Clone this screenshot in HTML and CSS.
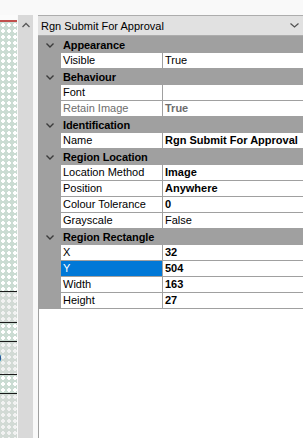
FILE: index.html
```html
<!DOCTYPE html>
<html>

<head>
  <title>Properties</title>
  <link rel="stylesheet" href="styles.css">
</head>

<body>

  <div class="top"></div>

  <div class="main">

    <!-- feuille à gauche (coupée) -->
    <div class="sheet">
      <div class="sheet-head"></div>
      <div class="sheet-row r1"></div>
      <div class="sheet-row r2"></div>
      <div class="sheet-row r3"></div>
      <div class="sheet-row r4"><span class="cut">0</span></div>
      <div class="sheet-row r5"></div>
      <div class="sheet-row r6"></div>
    </div>

    <div class="scroll">
      <svg class="up" width="8" height="6" viewBox="0 0 8 6"><path d="M0.5 5 L4 1.5 L7.5 5" fill="none" stroke="#5a5a5a" stroke-width="1.3"/></svg>
    </div>

    <div class="panel">
      <div class="combo">
        <span>Rgn Submit For Approval</span>
        <svg width="9" height="5" viewBox="0 0 9 5"><path d="M0.5 0.5 L4.5 4 L8.5 0.5" fill="none" stroke="#505050" stroke-width="1.2"/></svg>
      </div>

      <div class="grid">
        <div class="cat">
          <span class="toggle"><svg width="8" height="5" viewBox="0 0 8 5"><path d="M0.5 0.5 L4 4 L7.5 0.5" fill="none" stroke="#3c3c3c" stroke-width="1.4"/></svg></span>
          <b>Appearance</b>
        </div>
        <div class="prop"><span class="margin"></span><span class="name">Visible</span><span class="val">True</span></div>

        <div class="cat">
          <span class="toggle"><svg width="8" height="5" viewBox="0 0 8 5"><path d="M0.5 0.5 L4 4 L7.5 0.5" fill="none" stroke="#3c3c3c" stroke-width="1.4"/></svg></span>
          <b>Behaviour</b>
        </div>
        <div class="prop"><span class="margin"></span><span class="name">Font</span><span class="val"></span></div>
        <div class="prop off"><span class="margin"></span><span class="name">Retain Image</span><span class="val bold">True</span></div>

        <div class="cat">
          <span class="toggle"><svg width="8" height="5" viewBox="0 0 8 5"><path d="M0.5 0.5 L4 4 L7.5 0.5" fill="none" stroke="#3c3c3c" stroke-width="1.4"/></svg></span>
          <b>Identification</b>
        </div>
        <div class="prop"><span class="margin"></span><span class="name">Name</span><span class="val bold">Rgn Submit For Approval</span></div>

        <div class="cat">
          <span class="toggle"><svg width="8" height="5" viewBox="0 0 8 5"><path d="M0.5 0.5 L4 4 L7.5 0.5" fill="none" stroke="#3c3c3c" stroke-width="1.4"/></svg></span>
          <b>Region Location</b>
        </div>
        <div class="prop"><span class="margin"></span><span class="name">Location Method</span><span class="val bold">Image</span></div>
        <div class="prop"><span class="margin"></span><span class="name">Position</span><span class="val bold">Anywhere</span></div>
        <div class="prop"><span class="margin"></span><span class="name">Colour Tolerance</span><span class="val bold">0</span></div>
        <div class="prop"><span class="margin"></span><span class="name">Grayscale</span><span class="val">False</span></div>

        <div class="cat">
          <span class="toggle"><svg width="8" height="5" viewBox="0 0 8 5"><path d="M0.5 0.5 L4 4 L7.5 0.5" fill="none" stroke="#3c3c3c" stroke-width="1.4"/></svg></span>
          <b>Region Rectangle</b>
        </div>
        <div class="prop"><span class="margin"></span><span class="name">X</span><span class="val bold">32</span></div>
        <div class="prop selected"><span class="margin"></span><span class="name">Y</span><span class="val bold">504</span></div>
        <div class="prop"><span class="margin"></span><span class="name">Width</span><span class="val bold">163</span></div>
        <div class="prop"><span class="margin"></span><span class="name">Height</span><span class="val bold">27</span></div>
      </div>
    </div>

  </div>

</body>

</html>
```

FILE: styles.css
```css
body {
  margin: 0;
  width: 303px;
  height: 438px;
  overflow: hidden;
  background: #f9f9f9;
  font-family: "Liberation Sans", Arial, sans-serif;
  font-size: 11px;
  color: #000;
}

.top {
  height: 15px;
  background: #f9f9f9;
}

.main {
  display: flex;
  height: 423px;
}

/* feuille */
.sheet {
  width: 17px;
  display: flex;
  flex-direction: column;
  overflow: hidden;
  margin-right: 1px;
}

.sheet-head {
  height: 5px;
  background: #fbfbfb;
  border-bottom: 2px solid #c0504d;
}

.sheet-row {
  border-bottom: 1px solid #1a1a1a;
  background:
    radial-gradient(circle, #fff 40%, transparent 44%) 0 0 / 6px 6px,
    #cbdcd3;
  display: flex;
  align-items: center;
}

.r1 { height: 269px; }
.r2 { height: 30px; background: radial-gradient(circle, #f2f2f2 40%, transparent 44%) 0 0 / 6px 6px, #d2dad5; }
.r3 { height: 18px; }
.r4 { height: 32px; background: radial-gradient(circle, #f2f2f2 40%, transparent 44%) 0 0 / 6px 6px, #d2dad5; }
.r5 { height: 18px; }
.r6 { flex: 1; border-bottom: none; background: radial-gradient(circle, #f2f2f2 40%, transparent 44%) 0 0 / 6px 6px, #d2dad5; }

.cut {
  margin-left: -5px;
  font-size: 11px;
}

.scroll {
  width: 15px;
  background: #d9d9d9;
  display: flex;
  justify-content: center;
  align-items: flex-start;
  padding-top: 7px;
  box-sizing: border-box;
  margin-right: 5px;
}

.up {
  display: block;
}

/* grille de propriétés */
.panel {
  flex: 1;
  display: flex;
  flex-direction: column;
  background: #fff;
  border-left: 1px solid #a0a0a0;
}

.combo {
  height: 19px;
  background: #e1e1e1;
  border-top: 1px solid #adadad;
  border-bottom: 1px solid #adadad;
  display: flex;
  align-items: center;
  justify-content: space-between;
  padding: 0 4px 0 3px;
  margin-left: -1px;
}

.combo span {
  font-size: 11px;
  color: #000;
}

.grid {
  padding-top: 1px;
  background: #a0a0a0;
}

.cat {
  height: 16px;
  display: flex;
  align-items: center;
  background: #a0a0a0;
}

.cat b {
  font-weight: bold;
  letter-spacing: -0.1px;
}

.toggle {
  width: 22px;
  display: flex;
  justify-content: center;
  padding-top: 1px;
  margin-right: 2px;
}

.toggle svg {
  display: block;
}

.prop {
  height: 16px;
  display: flex;
  background: #fff;
}

.margin {
  width: 22px;
  background: #a0a0a0;
  flex: none;
}

.name {
  width: 99px;
  flex: none;
  padding-left: 2px;
  line-height: 15px;
  border-bottom: 1px solid #a0a0a0;
  border-right: 1px solid #a0a0a0;
  white-space: nowrap;
  overflow: hidden;
}

.val {
  flex: 1;
  padding-left: 2px;
  line-height: 15px;
  border-bottom: 1px solid #a0a0a0;
  white-space: nowrap;
  overflow: hidden;
}

.bold {
  font-weight: bold;
}

.off .name,
.off .val {
  color: #6d6d6d;
}

.selected .name {
  background: #0078d7;
  color: #fff;
}
```
